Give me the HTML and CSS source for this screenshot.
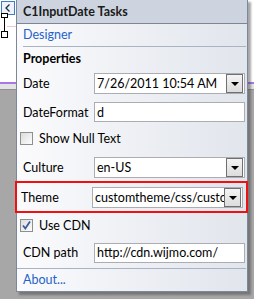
FILE: index.html
```html
<!DOCTYPE html>
<html>
<head>
<meta name="viewport" content="width=device-width, initial-scale=1">
<title>C1InputDate Tasks</title>
<link rel="stylesheet" href="styles.css">
</head>
<body>

<div class="surface">
  <div class="surface-top">
    <div class="smart-tag">
      <svg width="12" height="12" viewBox="0 0 12 12"><path d="M7.5 2.5 L4 6 L7.5 9.5" fill="none" stroke="#1d2b45" stroke-width="1.3"/></svg>
    </div>
    <div class="handle handle-a"></div>
    <div class="handle-line"></div>
    <div class="handle handle-b"></div>
    <div class="pink-rule"></div>
  </div>
  <div class="purple-rule"></div>
  <div class="surface-band"></div>
  <div class="surface-gray"></div>
</div>

<div class="tasks">
  <div class="tasks-head">C1InputDate Tasks</div>

  <div class="link-row">Designer</div>
  <div class="sep"></div>

  <div class="section">Properties</div>

  <div class="row row-date">
    <span class="lbl">Date</span>
    <div class="combo"><span class="val">7/26/2011 10:54 AM</span><span class="drop"></span></div>
  </div>

  <div class="row row-fmt">
    <span class="lbl">DateFormat</span>
    <div class="textbox"><span class="val">d</span></div>
  </div>

  <div class="row row-check">
    <span class="check"></span>
    <span class="check-lbl">Show Null Text</span>
  </div>

  <div class="row row-culture">
    <span class="lbl">Culture</span>
    <div class="combo"><span class="val">en-US</span><span class="drop"></span></div>
  </div>

  <div class="highlight">
    <div class="row row-theme">
      <span class="lbl">Theme</span>
      <div class="combo"><span class="val clip">customtheme/css/custom.css</span><span class="drop"></span></div>
    </div>
  </div>

  <div class="row row-cdn">
    <span class="check checked">
      <svg width="11" height="11" viewBox="0 0 11 11"><path d="M2 5.5 L4.3 8.5 L9 1.5" fill="none" stroke="#3d5a9e" stroke-width="1.8"/></svg>
    </span>
    <span class="check-lbl">Use CDN</span>
  </div>

  <div class="row row-path">
    <span class="lbl">CDN path</span>
    <div class="textbox"><span class="val">http://cdn.wijmo.com/</span></div>
  </div>
  <div class="sep sep-bottom"></div>

  <div class="link-row about">About...</div>
</div>

</body>
</html>
```

FILE: styles.css
```css
body {
  margin: 0;
  width: 254px;
  height: 299px;
  overflow: hidden;
  position: relative;
  font-family: Lato, "Open Sans", sans-serif;
  font-size: 12.5px;
  color: #000;
}

/* design surface behind the task panel */
.surface {
  display: flex;
  flex-direction: column;
  height: 299px;
}
.surface-top {
  height: 82px;
  background: #fff;
  position: relative;
}
.purple-rule { height: 2px; background: #a678e8; }
.surface-band { height: 5px; background: #e3e3e3; border-bottom: 1px solid #8e8e8e; }
.surface-gray { flex: 1; background: #a7a7a7; }

.smart-tag {
  position: absolute;
  left: 1px;
  top: 1px;
  width: 12px;
  height: 12px;
  border: 1px solid #3f7dc9;
  background: #eef3fa;
}
.smart-tag svg { display: block; }
.handle {
  position: absolute;
  left: 1px;
  width: 5px;
  height: 5px;
  border: 1px solid #000;
  background: #fff;
}
.handle-a { top: 13px; height: 3px; }
.handle-b { top: 31px; }
.handle-line {
  position: absolute;
  left: 4px;
  top: 18px;
  width: 1px;
  height: 13px;
  background: #000;
}
.pink-rule {
  position: absolute;
  left: 7px;
  top: 26px;
  width: 9px;
  height: 1px;
  background: #ecc9d2;
}

/* task panel */
.tasks {
  position: absolute;
  left: 16px;
  top: -1px;
  width: 230px;
  height: 291px;
  border: 1px solid #7b879b;
  background: linear-gradient(to right, #fbfbfd, #e1e5ec);
  box-shadow: 3px 3px 2px rgba(60, 60, 60, 0.45);
}
.tasks-head {
  height: 23px;
  border-bottom: 1px solid #7d8696;
  background: #cdd4e0;
  padding-left: 6px;
  font-weight: bold;
  line-height: 23px;
  color: #1b1b1b;
}
.link-row {
  height: 22px;
  line-height: 22px;
  padding-left: 6px;
  color: #1f63c8;
}
.sep {
  height: 1px;
  margin-left: 6px;
  margin-right: 1px;
  background: #a9b3c3;
}
.sep-bottom { margin-left: 0; background: #a6b4c6; }
.section {
  height: 23px;
  line-height: 23px;
  padding-left: 6px;
  font-weight: bold;
}

.row {
  display: flex;
  align-items: center;
  padding-left: 6px;
}
.row-date { height: 26px; }
.row-fmt { height: 32px; }
.row-check { height: 20px; padding-left: 3px; }
.row-culture { height: 28px; margin-top: 5px; }
.row-theme { height: 28px; }
.row-cdn { height: 24px; padding-left: 3px; }
.row-path { height: 31px; }
.about { height: 22px; }

.lbl { width: 71px; flex: none; }

.combo, .textbox {
  width: 149px;
  height: 19px;
  border: 1px solid #abadb3;
  background: #fff;
  display: flex;
  align-items: center;
  box-sizing: content-box;
}
.textbox { height: 18px; }
.val {
  flex: 1;
  padding-left: 2px;
  white-space: nowrap;
  overflow: hidden;
}
.drop {
  flex: none;
  width: 15px;
  height: 17px;
  margin-right: 1px;
  border: 1px solid #707070;
  background: linear-gradient(#f4f4f4, #dcdcdc);
  position: relative;
}
.drop::after {
  content: "";
  position: absolute;
  left: 4px;
  top: 7px;
  border-left: 4px solid transparent;
  border-right: 4px solid transparent;
  border-top: 4px solid #000;
}

.check {
  width: 11px;
  height: 11px;
  border: 1px solid #8e8f8f;
  background: linear-gradient(135deg, #dcdcdc, #fdfdfd);
  display: flex;
  align-items: center;
  justify-content: center;
  flex: none;
}
.check-lbl { margin-left: 6px; }

.highlight {
  margin-left: -2px;
  margin-right: -1px;
  border: 2px solid #f01010;
}
.highlight .row { padding-left: 4px; }
```
